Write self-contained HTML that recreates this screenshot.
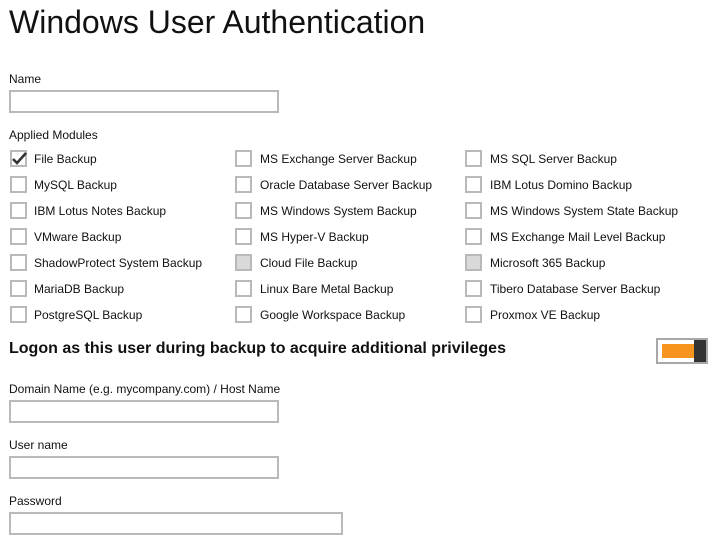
<!DOCTYPE html>
<html><head><style>
body{margin:0;width:720px;height:545px;background:#fff;font-family:"Liberation Sans",Arial,sans-serif;color:#111;position:relative;overflow:hidden}
.a{position:absolute;white-space:nowrap}
h1{position:absolute;left:9px;top:4px;margin:0;font-size:32px;font-weight:normal;color:#111}
.lbl{font-size:12px}
.in{position:absolute;border:2px solid #b9b9b9;background:#fff;box-sizing:border-box;height:23px}
.cb{position:absolute;width:17px;height:17px;border:2px solid #b9b9b9;box-sizing:border-box;background:#fff}
.cb.d{background:#d9d9d9}
.ct{position:absolute;font-size:12px}
</style></head><body>
<h1>Windows User Authentication</h1>
<div class="a lbl" style="left:9px;top:72px">Name</div>
<div class="in" style="left:9px;top:90px;width:270px"></div>
<div class="a lbl" style="left:9px;top:128px">Applied Modules</div>

<div class="cb" style="left:10px;top:150px"><svg width="17" height="17" viewBox="0 0 17 17" style="position:absolute;left:-1px;top:-2px"><path d="M2 9 L6 13 L15 3" stroke="#333" stroke-width="2.6" fill="none"/></svg></div>
<div class="ct" style="left:34px;top:152px">File Backup</div>
<div class="cb" style="left:10px;top:176px"></div><div class="ct" style="left:34px;top:178px">MySQL Backup</div>
<div class="cb" style="left:10px;top:202px"></div><div class="ct" style="left:34px;top:204px">IBM Lotus Notes Backup</div>
<div class="cb" style="left:10px;top:228px"></div><div class="ct" style="left:34px;top:230px">VMware Backup</div>
<div class="cb" style="left:10px;top:254px"></div><div class="ct" style="left:34px;top:256px">ShadowProtect System Backup</div>
<div class="cb" style="left:10px;top:280px"></div><div class="ct" style="left:34px;top:282px">MariaDB Backup</div>
<div class="cb" style="left:10px;top:306px"></div><div class="ct" style="left:34px;top:308px">PostgreSQL Backup</div>

<div class="cb" style="left:235px;top:150px"></div><div class="ct" style="left:260px;top:152px">MS Exchange Server Backup</div>
<div class="cb" style="left:235px;top:176px"></div><div class="ct" style="left:260px;top:178px">Oracle Database Server Backup</div>
<div class="cb" style="left:235px;top:202px"></div><div class="ct" style="left:260px;top:204px">MS Windows System Backup</div>
<div class="cb" style="left:235px;top:228px"></div><div class="ct" style="left:260px;top:230px">MS Hyper-V Backup</div>
<div class="cb d" style="left:235px;top:254px"></div><div class="ct" style="left:260px;top:256px">Cloud File Backup</div>
<div class="cb" style="left:235px;top:280px"></div><div class="ct" style="left:260px;top:282px">Linux Bare Metal Backup</div>
<div class="cb" style="left:235px;top:306px"></div><div class="ct" style="left:260px;top:308px">Google Workspace Backup</div>

<div class="cb" style="left:465px;top:150px"></div><div class="ct" style="left:490px;top:152px">MS SQL Server Backup</div>
<div class="cb" style="left:465px;top:176px"></div><div class="ct" style="left:490px;top:178px">IBM Lotus Domino Backup</div>
<div class="cb" style="left:465px;top:202px"></div><div class="ct" style="left:490px;top:204px">MS Windows System State Backup</div>
<div class="cb" style="left:465px;top:228px"></div><div class="ct" style="left:490px;top:230px">MS Exchange Mail Level Backup</div>
<div class="cb d" style="left:465px;top:254px"></div><div class="ct" style="left:490px;top:256px">Microsoft 365 Backup</div>
<div class="cb" style="left:465px;top:280px"></div><div class="ct" style="left:490px;top:282px">Tibero Database Server Backup</div>
<div class="cb" style="left:465px;top:306px"></div><div class="ct" style="left:490px;top:308px">Proxmox VE Backup</div>

<div class="a" style="left:9px;top:340px;font-size:16px;font-weight:bold">Logon as this user during backup to acquire additional privileges</div>
<div class="a" style="left:656px;top:338px;width:52px;height:26px;border:2px solid #a8a8a8;box-sizing:border-box;background:#fff">
<div class="a" style="left:4px;top:4px;width:34px;height:14px;background:#f7941d"></div>
<div class="a" style="left:36px;top:0;width:12px;height:22px;background:#333"></div>
</div>

<div class="a lbl" style="left:9px;top:382px">Domain Name (e.g. mycompany.com) / Host Name</div>
<div class="in" style="left:9px;top:400px;width:270px"></div>
<div class="a lbl" style="left:9px;top:438px">User name</div>
<div class="in" style="left:9px;top:456px;width:270px"></div>
<div class="a lbl" style="left:9px;top:494px">Password</div>
<div class="in" style="left:9px;top:512px;width:334px"></div>
</body></html>
